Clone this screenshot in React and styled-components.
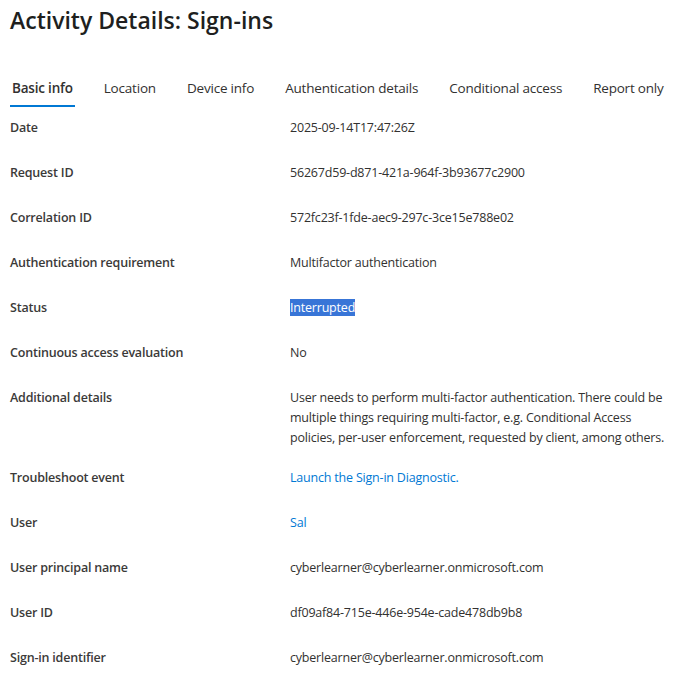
import React, { useState } from "react";
import styled, { createGlobalStyle } from "styled-components";

const GlobalStyle = createGlobalStyle`
  body {
    margin: 0;
    background: #ffffff;
    font-family: "Segoe UI", "Open Sans", "Liberation Sans", sans-serif;
    color: #323130;
  }
`;

const Page = styled.div`
  padding: 0 8px 0 10px;
`;

const Title = styled.h1`
  margin: 0;
  padding-top: 4px;
  font-size: 23px;
  line-height: 32px;
  font-weight: 600;
  color: #201f1e;
`;

const TabList = styled.div`
  display: flex;
  gap: 27px;
  margin-top: 35px;
`;

const Tab = styled.button`
  border: none;
  background: none;
  font-family: inherit;
  font-size: 13.5px;
  letter-spacing: -0.2px;
  line-height: 20px;
  white-space: nowrap;
  color: #323130;
  font-weight: ${p => (p.$active ? 600 : 400)};
  padding: 7px 2px 7px;
  border-bottom: 2px solid ${p => (p.$active ? "#0078d4" : "transparent")};
  cursor: pointer;
`;

const Grid = styled.dl`
  display: grid;
  grid-template-columns: 280px 1fr;
  margin: 0;
`;

const Label = styled.dt`
  font-size: 12.5px;
  letter-spacing: -0.2px;
  line-height: 20px;
  font-weight: 600;
  color: #3b3a39;
  padding: 11px 0 9px;
  min-height: 25px;
`;

const Value = styled.dd`
  margin: 0;
  font-size: 12.5px;
  letter-spacing: -0.2px;
  line-height: 20px;
  padding: 11px 0 9px;
  min-height: 25px;
`;

const Selected = styled.span`
  background: #3875d7;
  color: #ffffff;
`;

const Link = styled.a`
  color: #0078d4;
  text-decoration: none;
  cursor: pointer;
`;

const tabs = [
  "Basic info",
  "Location",
  "Device info",
  "Authentication details",
  "Conditional access",
  "Report only",
];

const rows = [
  ["Date", "2025-09-14T17:47:26Z"],
  ["Request ID", "56267d59-d871-421a-964f-3b93677c2900"],
  ["Correlation ID", "572fc23f-1fde-aec9-297c-3ce15e788e02"],
  ["Authentication requirement", "Multifactor authentication"],
  ["Status", <Selected>Interrupted</Selected>],
  ["Continuous access evaluation", "No"],
  [
    "Additional details",
    "User needs to perform multi-factor authentication. There could be multiple things requiring multi-factor, e.g. Conditional Access policies, per-user enforcement, requested by client, among others.",
  ],
  ["Troubleshoot event", <Link>Launch the Sign-in Diagnostic.</Link>],
  ["User", <Link>Sal</Link>],
  ["User principal name", "cyberlearner@cyberlearner.onmicrosoft.com"],
  ["User ID", "df09af84-715e-446e-954e-cade478db9b8"],
  ["Sign-in identifier", "cyberlearner@cyberlearner.onmicrosoft.com"],
];

export default function App() {
  const [active, setActive] = useState(0);

  return (
    <Page>
      <GlobalStyle />
      <Title>Activity Details: Sign-ins</Title>
      <TabList>
        {tabs.map((t, i) => (
          <Tab key={t} $active={i === active} onClick={() => setActive(i)}>
            {t}
          </Tab>
        ))}
      </TabList>
      <Grid>
        {rows.map(([label, value]) => (
          <React.Fragment key={label}>
            <Label>{label}</Label>
            <Value>{value}</Value>
          </React.Fragment>
        ))}
      </Grid>
    </Page>
  );
}
